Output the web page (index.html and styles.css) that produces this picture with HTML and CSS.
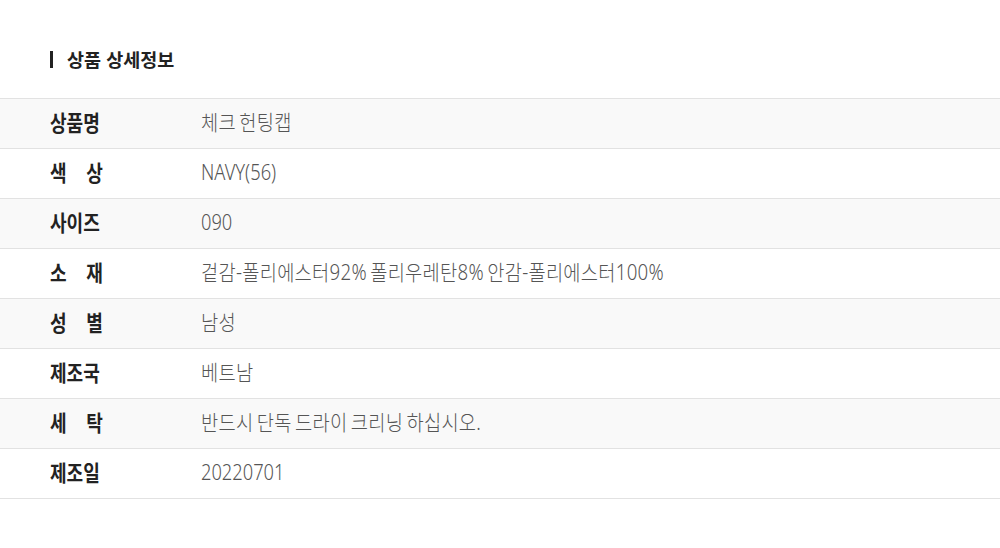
FILE: index.html
```html
<!DOCTYPE html>
<html lang="ko">
<head>
<meta charset="utf-8">
<link rel="stylesheet" href="styles.css">
</head>
<body>
<div class="page">
  <h2 class="title"><span class="bar"></span>상품 상세정보</h2>
  <div class="table">
    <div class="row shade"><div class="label">상품명</div><div class="value">체크 헌팅캡</div></div>
    <div class="row"><div class="label">색 상</div><div class="value latin">NAVY(56)</div></div>
    <div class="row shade"><div class="label">사이즈</div><div class="value latin">090</div></div>
    <div class="row"><div class="label">소 재</div><div class="value">겉감-폴리에스터92% 폴리우레탄8% 안감-폴리에스터100%</div></div>
    <div class="row shade"><div class="label">성 별</div><div class="value">남성</div></div>
    <div class="row"><div class="label">제조국</div><div class="value">베트남</div></div>
    <div class="row shade"><div class="label">세 탁</div><div class="value">반드시 단독 드라이 크리닝 하십시오.</div></div>
    <div class="row"><div class="label">제조일</div><div class="value latin">20220701</div></div>
  </div>
</div>
</body>
</html>
```
FILE: styles.css
```css
html, body { margin: 0; padding: 0; background: #fff; }
body { font-family: "Noto Sans CJK KR", "Noto Sans", sans-serif; color: #222; }
.page { padding-top: 46px; }
.title {
  margin: 0 0 26px 50px;
  display: flex;
  align-items: center;
  font-size: 18.5px;
  font-weight: 700;
  line-height: 26px;
  color: #222;
}
.bar { width: 3px; height: 17px; background: #222; margin-right: 14px; }
.table { border-top: 1px solid #e2e2e2; }
.row {
  box-sizing: border-box;
  display: flex;
  align-items: center;
  height: 50px;
  padding-bottom: 4px;
  border-bottom: 1px solid #e2e2e2;
}
.row.shade { background: #f9f9f9; }
.label {
  flex: none;
  margin-left: 50px;
  width: 63px;
  margin-right: 88px;
  font-size: 21.5px;
  font-weight: 700;
  line-height: 28px;
  color: #222;
  text-align: justify;
  text-align-last: justify;
  transform: scaleX(0.84);
  transform-origin: left center;
}
.value {
  flex: none;
  font-family: "Noto Sans", "Noto Sans CJK KR", sans-serif;
  font-size: 21px;
  font-weight: 300;
  line-height: 28px;
  color: #555;
  white-space: nowrap;
  letter-spacing: 0.3px;
  word-spacing: -2px;
  transform: scaleX(0.89);
  transform-origin: left center;
}
.value.latin {
  letter-spacing: 0;
  word-spacing: 0;
  transform: scaleX(0.87);
}
```
